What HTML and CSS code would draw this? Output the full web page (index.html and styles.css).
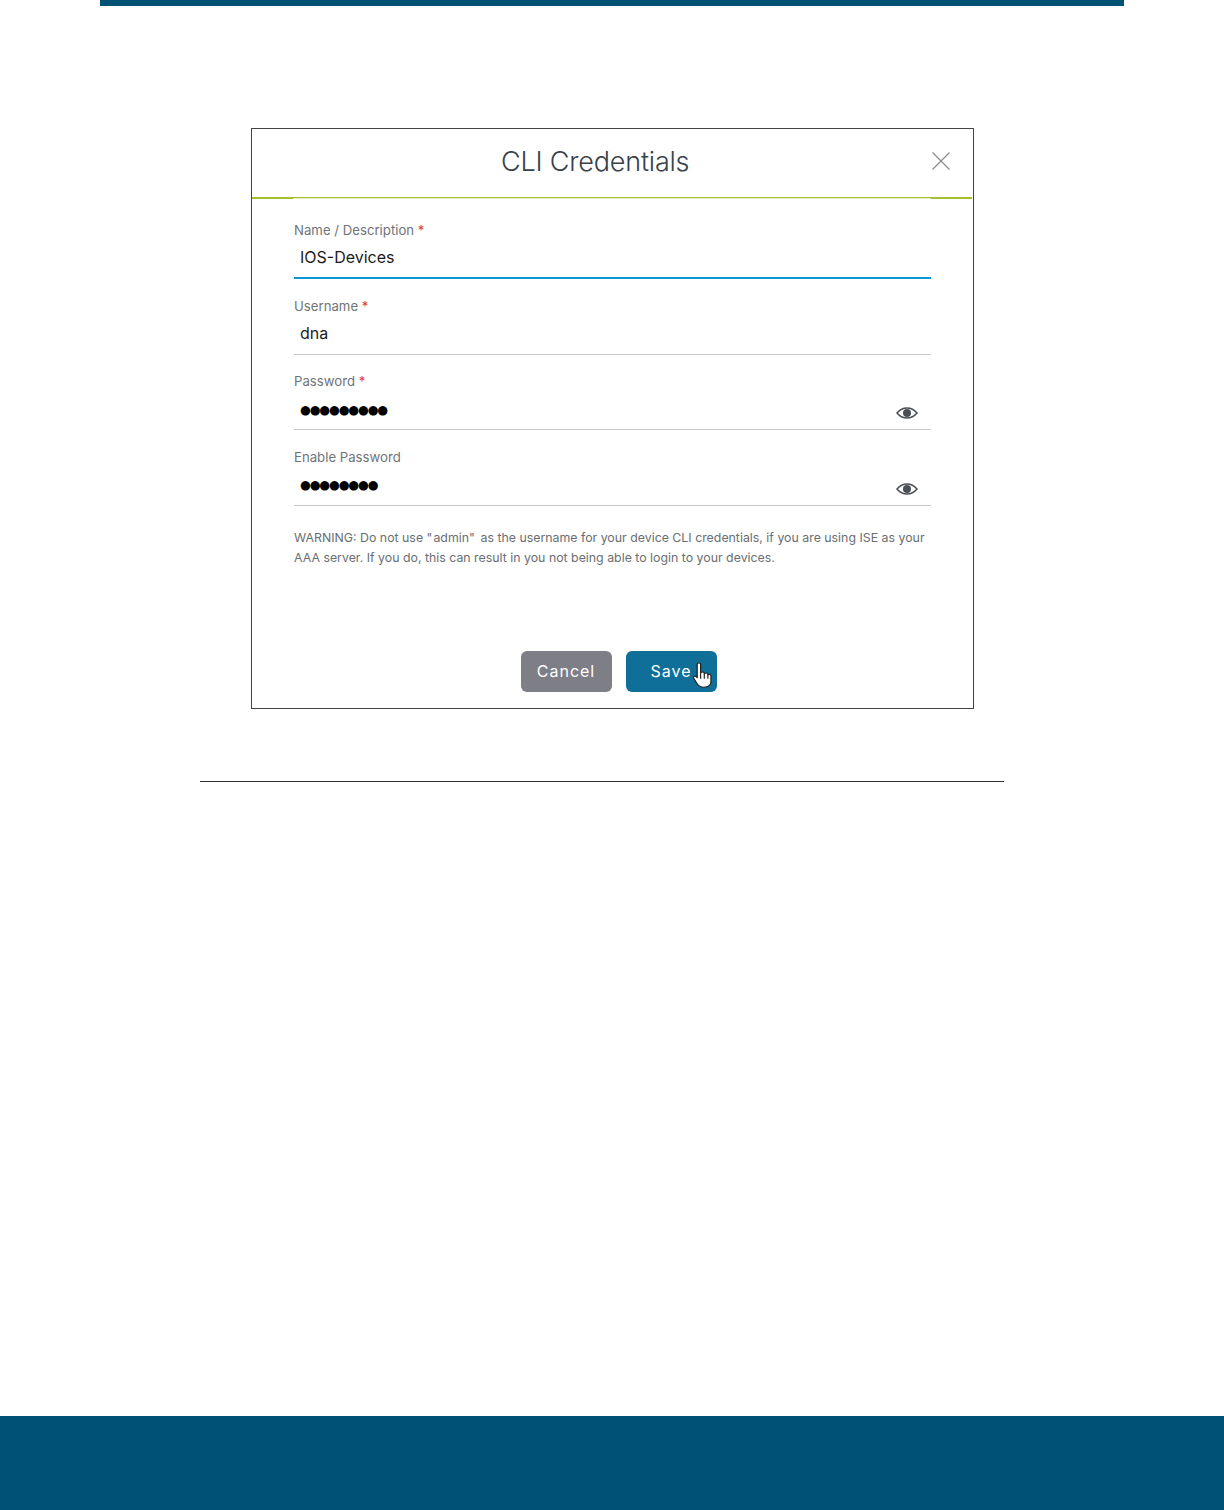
FILE: index.html
```html
<!DOCTYPE html>
<html lang="en">
<head>
    <meta charset="UTF-8">
    <title>CLI Credentials</title>
    <link rel="stylesheet" href="styles.css">
</head>
<body>
    <div class="top-bar"></div>

    <div class="figure">
        <div class="dialog-header">
            <h1>CLI Credentials</h1>
            <svg class="close-icon" width="20" height="20" viewBox="0 0 20 20">
                <path d="M1.5 1.5L18.5 18.5M18.5 1.5L1.5 18.5" stroke="#8a8d90" stroke-width="1.2" fill="none"/>
            </svg>
        </div>
        <div class="green-line"><span></span><span></span></div>

        <form class="dialog-form">
            <div class="form-group">
                <label>Name / Description <span class="req">*</span></label>
                <div class="field focused"><span class="value">IOS-Devices</span></div>
            </div>
            <div class="form-group">
                <label>Username <span class="req">*</span></label>
                <div class="field"><span class="value">dna</span></div>
            </div>
            <div class="form-group">
                <label>Password <span class="req">*</span></label>
                <div class="field">
                    <span class="dots">●●●●●●●●●</span>
                    <svg class="eye" width="22" height="12" viewBox="0 0 22 12">
                        <path d="M1 6C4 2.4 7.4 1 11 1s7 1.4 10 5c-3 3.6-6.400 5-10 5S4 9.600 1 6z" fill="none" stroke="#4a4f55" stroke-width="1.500"/>
                        <circle cx="11" cy="6" r="4" fill="#4a4f55"/>
                    </svg>
                </div>
            </div>
            <div class="form-group">
                <label>Enable Password</label>
                <div class="field">
                    <span class="dots">●●●●●●●●</span>
                    <svg class="eye" width="22" height="12" viewBox="0 0 22 12">
                        <path d="M1 6C4 2.4 7.4 1 11 1s7 1.4 10 5c-3 3.6-6.400 5-10 5S4 9.600 1 6z" fill="none" stroke="#4a4f55" stroke-width="1.500"/>
                        <circle cx="11" cy="6" r="4" fill="#4a4f55"/>
                    </svg>
                </div>
            </div>
            <p class="warning">WARNING: Do not use "&#8202;admin"&#8201; as the username for your device CLI credentials, if you are using ISE as your AAA server. If you do, this can result in you not being able to login to your devices.</p>
        </form>

        <div class="buttons">
            <div class="btn btn-cancel">Cancel</div>
            <div class="btn btn-save">
                Save
                <svg class="cursor" width="23" height="28" viewBox="0 0 20 30" preserveAspectRatio="none">
                    <path d="M4.500 2.500c0-2 3-2 3 0v9.500c.2-1.800 3-1.800 3.200 0v1c.2-1.600 2.900-1.600 3.100.2v1c.3-1.400 2.700-1.200 2.700.6v6.200c0 3-1.800 6-6 6-3.500 0-5-1.500-6.500-4.500L1.500 17.500c-1-1.800 1.300-3.200 2.400-1.600l.6 1z" fill="#fff" stroke="#222" stroke-width="1.100" stroke-linejoin="round"/>
                    <path d="M7.500 12v6M10.700 13v5M13.800 14.200V18" stroke="#222" stroke-width="1" fill="none"/>
                </svg>
            </div>
        </div>
    </div>

    <div class="rule"></div>

    <div class="footer"></div>
</body>
</html>
```

FILE: styles.css
```css
html, body {
    margin: 0;
    padding: 0;
}
body {
    font-family: 'Inter', 'Liberation Sans', sans-serif;
    height: 1510px;
    background: #fff;
    display: flex;
    flex-direction: column;
    overflow: hidden;
}
.top-bar {
    height: 6px;
    margin: 0 100px;
    background: #005274;
}
.figure {
    width: 723px;
    height: 581px;
    box-sizing: border-box;
    margin: 122px 0 0 251px;
    border: 1px solid #444;
    display: flex;
    flex-direction: column;
}
.dialog-header {
    height: 68px;
    box-sizing: border-box;
    display: flex;
    align-items: center;
    justify-content: space-between;
    padding: 0 22px 4px 249px;
}
h1 {
    margin: 0;
    font-size: 27px;
    font-weight: 300;
    color: #39424a;
    letter-spacing: -0.2px;
}
.close-icon {
    display: block;
}
.green-line {
    height: 2px;
    box-sizing: border-box;
    margin-right: 1px;
    border-top: 1px solid #a4bf2c;
    background: #e6eec4;
    display: flex;
    justify-content: space-between;
}
.green-line span {
    width: 41px;
    height: 1px;
    background: #a4bf2c;
}
.dialog-form {
    padding: 23px 42px 0 42px;
}
.form-group {
    height: 75.6px;
    box-sizing: border-box;
}
label {
    display: block;
    font-size: 13.2px;
    line-height: 16px;
    color: #6f7478;
}
.req {
    color: #e2313c;
}
.field {
    height: 38px;
    margin-top: 3px;
    box-sizing: border-box;
    border-bottom: 1px solid #c8c8c8;
    padding: 0 13px 0 6px;
    display: flex;
    align-items: center;
    justify-content: space-between;
}
.field.focused {
    border-bottom: 2px solid #0a96d6;
}
.value {
    font-size: 16px;
    color: #1b1b1b;
    padding-bottom: 4px;
}
.dots {
    font-family: 'DejaVu Sans', sans-serif;
    font-size: 12.4px;
    letter-spacing: -1.15px;
    color: #000;
    padding-bottom: 3px;
}
.eye {
    display: block;
    margin-top: 5px;
}
.warning {
    margin: 4px 0 0;
    font-size: 12.35px;
    line-height: 20px;
    color: #6a6e72;
}
.buttons {
    margin-top: auto;
    padding: 0 0 16px 12px;
    display: flex;
    justify-content: center;
    gap: 14px;
}
.btn {
    position: relative;
    width: 91px;
    height: 41px;
    border-radius: 6px;
    color: #fff;
    font-size: 16px;
    line-height: 40px;
    letter-spacing: 1px;
    text-align: center;
}
.btn-cancel {
    background: #7d7e86;
}
.btn-save {
    background: #0f6f98;
}
.cursor {
    position: absolute;
    left: 66px;
    top: 11px;
}
.rule {
    height: 1px;
    margin: 72px 220px 0 200px;
    background: #333;
}
.footer {
    margin-top: auto;
    height: 94px;
    background: #005274;
}
```
